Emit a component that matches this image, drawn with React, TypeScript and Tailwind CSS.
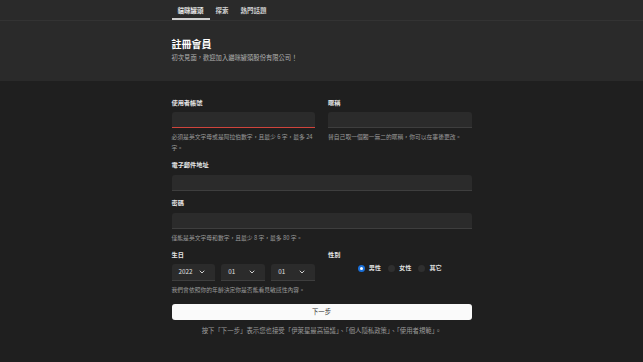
import { ChevronDown } from "lucide-react";

const font = { fontFamily: '"Noto Sans CJK TC", "Noto Sans", sans-serif' };

function Label({ children }: { children: React.ReactNode }) {
  return <div className="h-[10px] text-[6.2px] leading-[10px] font-bold text-[#e6e6e6] mb-[4.5px]">{children}</div>;
}

function Help({ children }: { children: React.ReactNode }) {
  return <p className="mt-[3px] text-[5.8px] leading-[11px] text-[#9a9a9a]">{children}</p>;
}

function Field({ error }: { error?: boolean }) {
  return (
    <div
      className={`h-[16px] rounded-t-[3px] bg-[#2b2b2b] border-b ${error ? "border-[#d0443c]" : "border-[#3e3e3e]"}`}
    />
  );
}

function Select({ value }: { value: string }) {
  return (
    <div className="h-[17px] w-[44px] rounded-t-[3px] bg-[#2b2b2b] border-b border-[#3e3e3e] flex items-center justify-between pl-[7px] pr-[9px]">
      <span className="text-[6.3px] leading-none text-[#e0e0e0]">{value}</span>
      <ChevronDown className="w-[8px] h-[8px] text-[#d0d0d0]" strokeWidth={3} />
    </div>
  );
}

function Radio({ label, checked }: { label: string; checked?: boolean }) {
  return (
    <div className="flex items-center gap-[4px] h-[10px]">
      {checked ? (
        <span className="w-[7px] h-[7px] rounded-full bg-[#1a6fd8] flex items-center justify-center">
          <span className="w-[3px] h-[3px] rounded-full bg-white" />
        </span>
      ) : (
        <span className="w-[7px] h-[7px] rounded-full bg-[#2f2f2f]" />
      )}
      <span className="text-[6.2px] leading-none font-bold text-[#dcdcdc]">{label}</span>
    </div>
  );
}

export default function App() {
  return (
    <div style={font} className="min-h-[362px] bg-[#1f1f1f]">
      <div className="bg-[#2a2a2a]">
        <div className="border-b border-[#333333]">
          <nav className="w-[300px] mx-auto h-[20px] flex">
            <div className="px-[6px] h-full flex flex-col justify-center relative">
              <span className="text-[6.5px] font-bold text-[#e8e8e8] leading-none">貓咪罐頭</span>
              <span className="absolute left-0 right-0 bottom-0 h-[2px] bg-[#cfcfcf]" />
            </div>
            <div className="px-[6px] h-full flex items-center">
              <span className="text-[6.5px] font-bold text-[#cfcfcf] leading-none">探索</span>
            </div>
            <div className="px-[6px] h-full flex items-center">
              <span className="text-[6.5px] font-bold text-[#cfcfcf] leading-none">熱門話題</span>
            </div>
          </nav>
        </div>
        <div className="w-[300px] mx-auto pt-[16px] pb-[18px]">
          <h1 className="text-[10px] leading-[14px] font-bold text-white">註冊會員</h1>
          <p className="mt-[1.5px] text-[6.3px] leading-[10px] text-[#b0b0b0]">初次見面，歡迎加入貓咪罐頭股份有限公司！</p>
        </div>
      </div>

      <div className="w-[300px] mx-auto pt-[17px] flex flex-col">
        <div className="grid grid-cols-2 gap-[13px]">
          <div>
            <Label>使用者帳號</Label>
            <Field error />
            <Help>必須是英文字母或是阿拉伯數字，且最少 6 字，最多 24 字。</Help>
          </div>
          <div>
            <Label>暱稱</Label>
            <Field />
            <Help>替自己取一個獨一無二的暱稱，你可以在事後更改。</Help>
          </div>
        </div>

        <div className="mt-[7px]">
          <Label>電子郵件地址</Label>
          <Field />
        </div>

        <div className="mt-[7.5px]">
          <Label>密碼</Label>
          <Field />
          <Help>僅能是英文字母和數字，且最少 8 字，最多 80 字。</Help>
        </div>

        <div className="mt-[7px]">
          <div className="grid grid-cols-2 gap-[13px]">
            <div>
              <Label>生日</Label>
              <div className="flex gap-[6px]">
                <Select value="2022" />
                <Select value="01" />
                <Select value="01" />
              </div>
            </div>
            <div>
              <Label>性別</Label>
              <div className="flex justify-center gap-[7px] -mt-[0.5px]">
                <Radio label="男性" checked />
                <Radio label="女性" />
                <Radio label="其它" />
              </div>
            </div>
          </div>
          <Help>我們會依照你的年齡決定你是否能看見敏感性內容。</Help>
        </div>

        <div className="mt-[9px]">
          <button className="block w-full h-[16px] rounded-[3px] bg-[#fafafa] text-[6.3px] leading-none text-[#333333]">下一步</button>
          <p className="mt-[5px] text-center text-[6.4px] leading-[11px] text-[#9a9a9a]">
            按下「下一步」表示您也接受「伊萊星最高協議」、「個人隱私政策」、「使用者規範」。
          </p>
        </div>
      </div>
    </div>
  );
}
